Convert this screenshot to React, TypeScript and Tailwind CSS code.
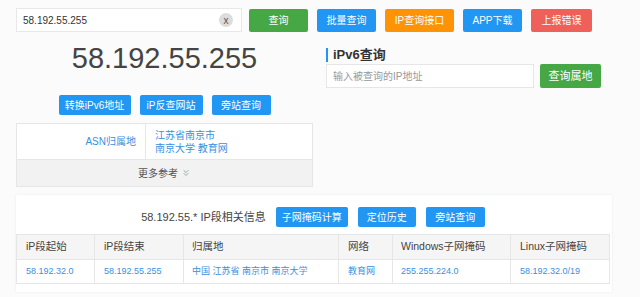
import { ChevronsDown } from 'lucide-react'

const font = { fontFamily: '"Liberation Sans", "Noto Sans CJK SC", sans-serif' }

function Btn({ label, color, w }: { label: string; color: string; w: string }) {
  return (
    <button className={`${w} ${color} rounded-[2px] text-white text-[10px] flex items-center justify-center shrink-0`}>
      {label}
    </button>
  )
}

export default function App() {
  const rows = [
    { start: '58.192.32.0', end: '58.192.55.255', loc: '中国 江苏省 南京市 南京大学', net: '教育网', win: '255.255.224.0', linux: '58.192.32.0/19' },
  ]

  return (
    <main className="w-[640px] h-[297px] bg-[#fbfbfb] overflow-hidden text-[#333]" style={font}>
      <div className="flex items-center pt-2 pl-4">
        <div className="w-[226px] h-[24px] bg-white border border-[#e8e8e8] flex items-center pl-[6px] pr-[8px] text-[10px] text-[#333]">
          <span className="flex-1">58.192.55.255</span>
          <span className="w-[14px] h-[14px] rounded-full bg-[#dcdcdc] text-[#555] text-[10px] flex items-center justify-center">x</span>
        </div>
        <div className="flex gap-[9px] ml-[7px]">
          <Btn label="查询" color="bg-[#45a845] h-[23px]" w="w-[59px]" />
          <Btn label="批量查询" color="bg-[#2196f3] h-[23px]" w="w-[59px]" />
          <Btn label="IP查询接口" color="bg-[#ff9306] h-[23px]" w="w-[69px]" />
          <Btn label="APP下载" color="bg-[#2196f3] h-[23px]" w="w-[59px]" />
          <Btn label="上报错误" color="bg-[#f0605a] h-[23px]" w="w-[61px]" />
        </div>
      </div>

      <div className="flex mt-[6px]">
        <div className="w-[297px] ml-4 flex flex-col">
          <div className="text-[29px] leading-[40px] text-[#444] text-center">58.192.55.255</div>
          <div className="flex justify-center gap-[9px] mt-[17px]">
            <Btn label="转换iPv6地址" color="bg-[#2196f3] h-[20px]" w="w-[72px]" />
            <Btn label="iP反查网站" color="bg-[#2196f3] h-[20px]" w="w-[63px]" />
            <Btn label="旁站查询" color="bg-[#2196f3] h-[20px]" w="w-[59px]" />
          </div>
          <div className="mt-[8px] border border-[#e6e6e6] bg-white">
            <div className="flex h-[35px] text-[10px]">
              <div className="w-[129px] border-r border-[#e6e6e6] flex items-center justify-end pr-[9px] text-[#3b8fe0]">ASN归属地</div>
              <div className="flex flex-col justify-center pl-[9px] text-[#3b8fe0] leading-[13px]">
                <span>江苏省南京市</span>
                <span>南京大学 教育网</span>
              </div>
            </div>
            <div className="h-[27px] bg-[#f2f2f2] border-t border-[#e6e6e6] flex items-center justify-center text-[10px] text-[#555] gap-[3px]">
              更多参考 <ChevronsDown className="w-[10px] h-[10px] text-[#777]" strokeWidth={1.5} />
            </div>
          </div>
        </div>

        <div className="ml-[13px] pt-[9px]">
          <div className="flex items-center h-[16px]">
            <span className="w-[2px] h-[14px] bg-[#2196f3]" />
            <span className="ml-[5px] text-[13px] font-bold text-[#333]">iPv6查询</span>
          </div>
          <div className="flex items-center mt-[1px]">
            <div className="w-[208px] h-[24px] bg-white border border-[#e6e6e6] flex items-center pl-[6px] text-[10px] text-[#999]">输入被查询的IP地址</div>
            <div className="ml-[6px]">
              <Btn label="查询属地" color="bg-[#45a845] h-[24px] text-[11px]" w="w-[61px]" />
            </div>
          </div>
        </div>
      </div>

      <div className="ml-4 mt-[8px] w-[596px] bg-white shadow-[0_0_2px_rgba(0,0,0,0.08)] pt-[12px] pb-[8px]">
        <div className="flex items-center justify-center gap-[10px] pr-[2px]">
          <span className="text-[11px] text-[#444]">58.192.55.* IP段相关信息</span>
          <Btn label="子网掩码计算" color="bg-[#2196f3] h-[20px]" w="w-[72px]" />
          <Btn label="定位历史" color="bg-[#2196f3] h-[20px]" w="w-[58px]" />
          <Btn label="旁站查询" color="bg-[#2196f3] h-[20px]" w="w-[59px]" />
        </div>
        <table className="mt-[7px] w-[594px] border-collapse text-left">
          <thead>
            <tr className="bg-[#f5f5f5] h-[25px] text-[10.5px] text-[#444]">
              <th className="font-normal border border-[#e6e6e6] pl-[9px] w-[78px]">iP段起始</th>
              <th className="font-normal border border-[#e6e6e6] pl-[9px] w-[89px]">iP段结束</th>
              <th className="font-normal border border-[#e6e6e6] pl-[8px] w-[155px]">归属地</th>
              <th className="font-normal border border-[#e6e6e6] pl-[9px] w-[54px]">网络</th>
              <th className="font-normal border border-[#e6e6e6] pl-[8px] w-[118px]">Windows子网掩码</th>
              <th className="font-normal border border-[#e6e6e6] pl-[9px]">Linux子网掩码</th>
            </tr>
          </thead>
          <tbody>
            {rows.map((r) => (
              <tr key={r.start} className="h-[24px] text-[9px] text-[#3b8fe0]">
                <td className="border border-[#e6e6e6] pl-[9px]">{r.start}</td>
                <td className="border border-[#e6e6e6] pl-[9px]">{r.end}</td>
                <td className="border border-[#e6e6e6] pl-[8px]">{r.loc}</td>
                <td className="border border-[#e6e6e6] pl-[9px]">{r.net}</td>
                <td className="border border-[#e6e6e6] pl-[8px]">{r.win}</td>
                <td className="border border-[#e6e6e6] pl-[9px]">{r.linux}</td>
              </tr>
            ))}
          </tbody>
        </table>
      </div>
    </main>
  )
}
